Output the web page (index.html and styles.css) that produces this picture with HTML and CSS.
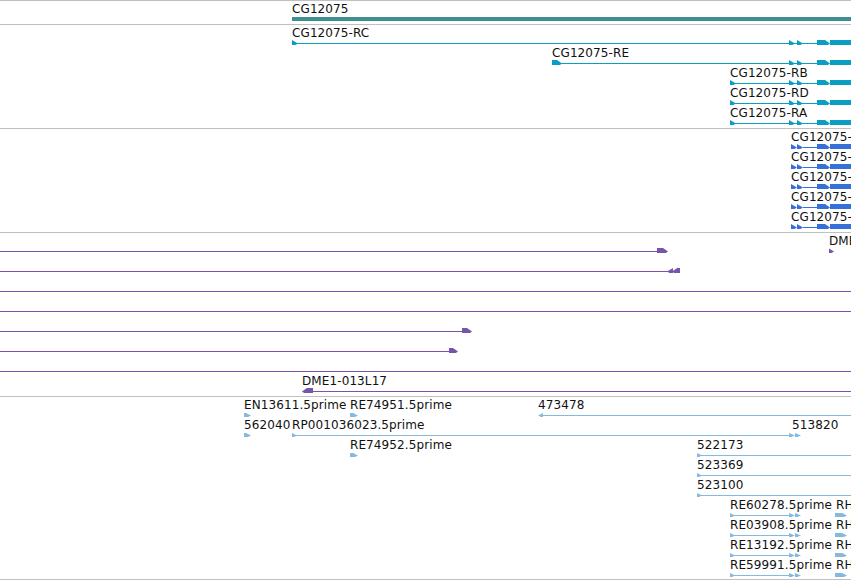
FILE: index.html
```html
<!DOCTYPE html>
<html lang="en">
<head>
  <meta charset="UTF-8">
  <title>CG12075 region</title>
  <link rel="stylesheet" href="styles.css">
</head>
<body>
  <div id="browser"></div>

  <script>
    // row-local drawing helpers, the feature line sits at y=18
    function line(a, b) { return `<rect x="${a}" y="18" width="${b - a}" height="1"/>`; }
    function box(a, b, t, h) { return `<rect x="${a}" y="${t}" width="${b - a}" height="${h}"/>`; }
    function tri(x, w, t, b) { return `<polygon points="${x},${t} ${x + w},18.5 ${x},${b}"/>`; }
    function rtri(x, w, t, b) { return `<polygon points="${x},18.5 ${x + w},${t} ${x + w},${b}"/>`; }
    function tip(x, w, t, b) {
      return `<polygon points="${x},${t} ${x + w - 5},${t} ${x + w},18.5 ${x + w - 5},${b} ${x},${b}"/>`;
    }
    function rtip(x, w, t, b) {
      return `<polygon points="${x},18.5 ${x + 5},${t} ${x + w},${t} ${x + w},${b} ${x + 5},${b}"/>`;
    }

    const W = 851;
    const tail = tri(789, 6, 15, 22) + tri(797, 6, 15, 22) + tip(817, 13, 15, 22) + box(830, W, 15, 7);
    const tail2 = tri(791, 6, 15, 22) + tri(797, 6, 15, 22) + line(803, 817) + tip(817, 13, 15, 22) + box(830, W, 15, 7);
    const estEnd = tri(789, 6, 16, 21) + tri(795, 6, 16, 21);

    const tracks = [
      { cls: "gene", rows: [
        { labels: [[292, "CG12075"]], svg: box(292, W, 16, 6) }
      ]},
      { cls: "mrna", rows: [
        { labels: [[292, "CG12075-RC"]], svg: line(292, 817) + tri(292, 6, 15, 22) + tail },
        { labels: [[552, "CG12075-RE"]], svg: line(552, 817) + tip(552, 10, 15, 22) + tail },
        { labels: [[730, "CG12075-RB"]], svg: line(730, 817) + tri(730, 6, 15, 22) + tail },
        { labels: [[730, "CG12075-RD"]], svg: line(730, 817) + tri(730, 6, 15, 22) + tail },
        { labels: [[730, "CG12075-RA"]], svg: line(730, 817) + tri(730, 6, 15, 22) + tail }
      ]},
      { cls: "cds", rows: [
        { labels: [[791, "CG12075-RF"]], svg: tail2 },
        { labels: [[791, "CG12075-RG"]], svg: tail2 },
        { labels: [[791, "CG12075-RH"]], svg: tail2 },
        { labels: [[791, "CG12075-RI"]], svg: tail2 },
        { labels: [[791, "CG12075-RJ"]], svg: tail2 }
      ]},
      { cls: "clone", rows: [
        { labels: [[829, "DME1-024M19"]], svg: line(0, 660) + tip(657, 11, 15, 22) + tri(829, 5, 15.5, 21.5) },
        { labels: [], svg: line(0, 668) + rtri(667, 6, 15, 22) + rtri(672, 6, 14.5, 22.5) + box(677, 680, 15, 7) },
        { labels: [], svg: line(0, W) },
        { labels: [], svg: line(0, W) },
        { labels: [], svg: line(0, 465) + tip(462, 10, 15, 22) },
        { labels: [], svg: line(0, 452) + tip(449, 9, 15, 22) },
        { labels: [], svg: line(0, W) },
        { labels: [[302, "DME1-013L17"]], svg: rtip(302, 11, 15, 22) + line(313, W) }
      ]},
      { cls: "est", rows: [
        { labels: [[244, "EN13611.5prime"], [350, "RE74951.5prime"], [538, "473478"]],
          svg: tip(244, 7, 16, 21) + tip(350, 8, 16, 21) + rtri(538, 5, 16, 21) + line(540, W) },
        { labels: [[244, "562040"], [292, "RP001036023.5prime"], [792, "513820"]],
          svg: tip(244, 7, 16, 21) + tri(292, 5, 16, 21) + line(292, 792) + estEnd },
        { labels: [[350, "RE74952.5prime"], [697, "522173"]],
          svg: tip(350, 8, 16, 21) + tri(697, 5, 16, 21) + line(697, W) },
        { labels: [[697, "523369"]], svg: tri(697, 5, 16, 21) + line(697, W) },
        { labels: [[697, "523100"]], svg: tri(697, 5, 16, 21) + line(697, W) },
        { labels: [[730, "RE60278.5prime"], [836, "RH43817.5prime"]],
          svg: tri(730, 5, 16, 21) + line(730, 792) + estEnd + tip(835, 12, 16, 21) },
        { labels: [[730, "RE03908.5prime"], [836, "RH06442.5prime"]],
          svg: tri(730, 5, 16, 21) + line(730, 792) + estEnd + tip(835, 12, 16, 21) },
        { labels: [[730, "RE13192.5prime"], [836, "RH27104.5prime"]],
          svg: tri(730, 5, 16, 21) + line(730, 792) + estEnd + tip(835, 12, 16, 21) },
        { labels: [[730, "RE59991.5prime"], [836, "RH51833.5prime"]],
          svg: tri(730, 5, 16, 21) + line(730, 792) + estEnd + tip(835, 12, 16, 21) }
      ]}
    ];

    const browser = document.getElementById("browser");
    tracks.forEach(track => {
      const div = document.createElement("div");
      div.className = "track " + track.cls;
      track.rows.forEach(row => {
        const r = document.createElement("div");
        r.className = "row";
        r.innerHTML = `<svg width="${W}" height="20">${row.svg}</svg>` +
          row.labels.map(l => `<span class="label" style="left:${l[0]}px">${l[1]}</span>`).join("");
        div.appendChild(r);
      });
      browser.appendChild(div);
    });
  </script>
</body>
</html>
```

FILE: styles.css
```css
body { margin: 0; font-family: "DejaVu Sans", sans-serif; font-size: 12px; color: #111; background: #fff; overflow: hidden; }
#browser { width: 851px; }
.track { border-top: 1px solid #c0c0c0; padding-bottom: 3px; }
.track:last-child { border-bottom: 1px solid #c0c0c0; padding-bottom: 2px; }
.row { position: relative; height: 20px; overflow: hidden; }
.row svg { position: absolute; left: 0; top: 0; display: block; }
.label { position: absolute; top: 1px; line-height: 14px; letter-spacing: 0.1px; white-space: nowrap; }
.gene svg { fill: #418e91; }
.mrna svg { fill: #0a9ec2; }
.cds svg { fill: #3570d8; }
.clone svg { fill: #7855ad; }
.est svg { fill: #85b9e0; }
```
